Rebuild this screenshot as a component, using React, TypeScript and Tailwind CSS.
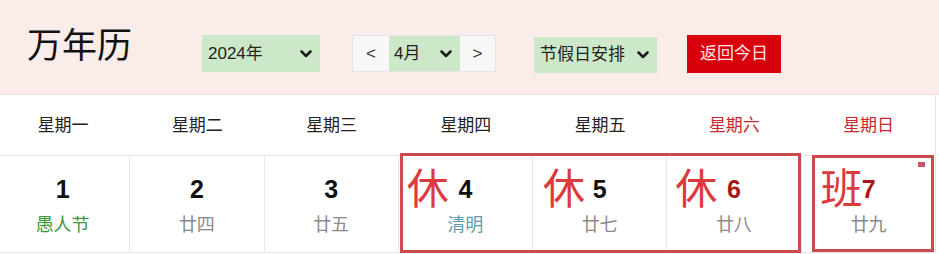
import React from "react";

const FONT = { fontFamily: '"Liberation Sans", "Noto Sans CJK SC", sans-serif' };

function Chevron({ className = "" }: { className?: string }) {
  return (
    <svg width="12" height="8" viewBox="0 0 12 8" className={className}>
      <polyline points="1.5,1.5 6,6 10.5,1.5" fill="none" stroke="#1a1a1a" strokeWidth="2.5" strokeLinecap="round" strokeLinejoin="round" />
    </svg>
  );
}

const weekdays = [
  { t: "星期一", red: false },
  { t: "星期二", red: false },
  { t: "星期三", red: false },
  { t: "星期四", red: false },
  { t: "星期五", red: false },
  { t: "星期六", red: true },
  { t: "星期日", red: true },
];

type Day = { n: string; lunar: string; lunarCls: string; numCls: string; mark?: string; markCls?: string };

const days: Day[] = [
  { n: "1", lunar: "愚人节", lunarCls: "text-[#3c9a3c]", numCls: "text-[#111]" },
  { n: "2", lunar: "廿四", lunarCls: "text-[#8a8a8a]", numCls: "text-[#111]" },
  { n: "3", lunar: "廿五", lunarCls: "text-[#8a8a8a]", numCls: "text-[#111]" },
  { n: "4", lunar: "清明", lunarCls: "text-[#5b9bb3]", numCls: "text-[#111]", mark: "休", markCls: "left-[8px]" },
  { n: "5", lunar: "廿七", lunarCls: "text-[#8a8a8a]", numCls: "text-[#111]", mark: "休", markCls: "left-[10px]" },
  { n: "6", lunar: "廿八", lunarCls: "text-[#8a8a8a]", numCls: "text-[#a8161c]", mark: "休", markCls: "left-[8px]" },
  { n: "7", lunar: "廿九", lunarCls: "text-[#8a8a8a]", numCls: "text-[#a8161c]", mark: "班", markCls: "left-[19px]" },
];

export default function App() {
  return (
    <div className="relative w-[939px] h-[254px] overflow-hidden bg-white" style={FONT}>
      {/* header */}
      <div className="h-[95px] bg-[#f9ece9] border-b border-[#f1dcd8] flex items-start">
        <div className="ml-[27px] mt-[28px] w-[175px] text-[35px] leading-none text-[#111]">万年历</div>
        <div className="mt-[35px] w-[118px] h-[37px] bg-[#cde8c9] flex items-center justify-between pl-[6px] pr-[8px]">
          <span className="text-[17px] text-[#222]">2024年</span>
          <Chevron />
        </div>
        <div className="ml-[32px] mt-[35px] h-[37px] flex border border-[#e4e4e4]">
          <div className="w-[36px] bg-[#f7f7f7] flex items-center justify-center text-[17px] text-[#333]">&lt;</div>
          <div className="w-[71px] bg-[#cde8c9] flex items-center justify-between pl-[5px] pr-[8px]">
            <span className="text-[17px] text-[#222]">4月</span>
            <Chevron />
          </div>
          <div className="w-[35px] bg-[#f7f7f7] flex items-center justify-center text-[17px] text-[#333]">&gt;</div>
        </div>
        <div className="ml-[38px] mt-[37px] w-[123px] h-[36px] bg-[#cde8c9] flex items-center justify-between pl-[6px] pr-[8px]">
          <span className="text-[17px] text-[#222]">节假日安排</span>
          <Chevron />
        </div>
        <div className="ml-[30px] mt-[35px] w-[94px] h-[38px] bg-[#d9000e] flex items-center justify-center text-[17px] text-[#fde4e4]">
          返回今日
        </div>
      </div>

      {/* table */}
      <div className="ml-[-4px] w-[940px] border-r border-[#e6e6e6]">
        <div className="grid grid-cols-[repeat(7,134.25px)] h-[60px] items-center">
          {weekdays.map((w) => (
            <div key={w.t} className={`text-center text-[17px] leading-none ${w.red ? "text-[#c62a2f]" : "text-[#222]"}`}>
              {w.t}
            </div>
          ))}
        </div>
        <div className="grid grid-cols-[repeat(7,134.25px)] h-[98px] border-t border-b border-[#e6e6e6]">
          {days.map((d, i) => (
            <div key={d.n} className={`relative flex flex-col items-center pt-[21px] ${i < 6 ? "border-r border-[#e8e8e8]" : ""}`}>
              {d.mark && (
                <span className={`absolute top-[13px] ${d.markCls} text-[42px] leading-none text-[#dc3a3e]`}>{d.mark}</span>
              )}
              <span className={`text-[25px] font-bold leading-none ${d.numCls}`}>{d.n}</span>
              <span className={`mt-[14px] text-[18px] leading-none ${d.lunarCls}`}>{d.lunar}</span>
            </div>
          ))}
        </div>
      </div>

      {/* holiday frames */}
      <div className="absolute left-[400px] top-[153px] w-[401px] h-[100px] border-[3px] border-[#c94b4d] pointer-events-none" />
      <div className="absolute left-[812px] top-[155px] w-[122px] h-[97px] border-[3px] border-[#c94b4d] pointer-events-none">
        <div className="absolute right-[6px] top-[4px] w-[7px] h-[5px] bg-[#c9506a]" />
      </div>
    </div>
  );
}
